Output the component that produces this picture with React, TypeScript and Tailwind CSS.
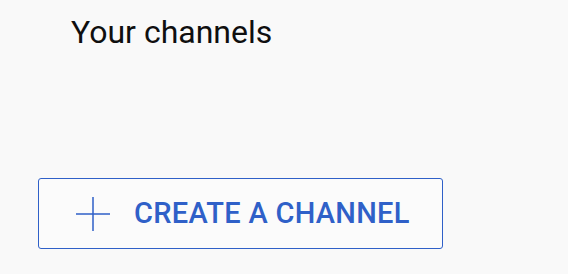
export default function App() {
  return (
    <div className="h-[274px] w-[568px] bg-[#f9f9f9] font-['Roboto',_'Liberation_Sans',_sans-serif]">
      <div className="pl-[71px] pt-[13px] text-[32px] leading-[38px] text-[#0f0f0f]">Your channels</div>
      <div className="pl-[38px] pt-[127px]">
        <button className="flex h-[71px] w-[405px] items-center rounded-[3px] border-[1.5px] border-[#2f60c8] bg-[#fbfbfb] pl-[37px] text-[#2f60c8]">
          <svg width="34" height="34" viewBox="0 0 34 34" className="shrink-0">
            <path d="M0 17H34M17 0V34" stroke="#2f60c8" strokeWidth="1.5" fill="none" />
          </svg>
          <span className="ml-[24px] text-[29px] font-medium tracking-[0.3px] leading-none">CREATE A CHANNEL</span>
        </button>
      </div>
    </div>
  );
}
